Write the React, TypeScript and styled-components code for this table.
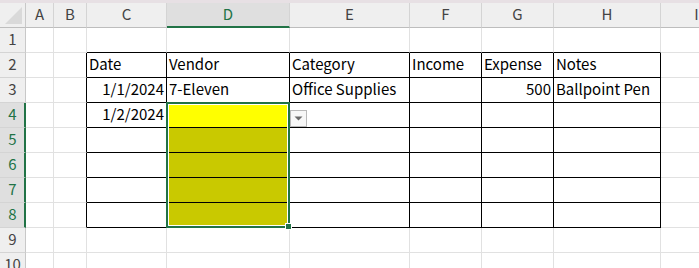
import React from 'react';
import styled, { createGlobalStyle } from 'styled-components';

const GlobalStyle = createGlobalStyle`
  html, body { margin: 0; padding: 0; background: #ffffff; overflow: hidden; }
  body { font-family: "Noto Sans CJK JP", "Noto Sans", sans-serif; }
`;

const GREEN = '#217346';
const GRID = '#e1e1e1';
const HEADER_BG = '#efefef';
const HEADER_SEL_BG = '#dfdfdf';
const HEADER_LINE = '#d4d4d4';
const ROW_H = 25;

type Col = { key: string; width: number };
const COLS: Col[] = [
  { key: 'A', width: 28 },
  { key: 'B', width: 33 },
  { key: 'C', width: 80 },
  { key: 'D', width: 123 },
  { key: 'E', width: 120 },
  { key: 'F', width: 72 },
  { key: 'G', width: 72 },
  { key: 'H', width: 107 },
  { key: 'I', width: 72 },
];
const ROW_HEADER_W = 26;
const ROW_COUNT = 10;

// table block C2:H8 carries thin black borders
const inTable = (r: number, c: number) => r >= 2 && r <= 8 && c >= 2 && c <= 7;
// D4:D8 is the current selection
const SEL_COL = 3;
const isSelRow = (r: number) => r >= 4 && r <= 8;

type CellData = { text: string; align?: 'left' | 'right' };
const DATA: Record<string, CellData> = {
  'C2': { text: 'Date' },
  'D2': { text: 'Vendor' },
  'E2': { text: 'Category' },
  'F2': { text: 'Income' },
  'G2': { text: 'Expense' },
  'H2': { text: 'Notes' },
  'C3': { text: '1/1/2024', align: 'right' },
  'D3': { text: '7-Eleven' },
  'E3': { text: 'Office Supplies' },
  'G3': { text: '500', align: 'right' },
  'H3': { text: 'Ballpoint Pen' },
  'C4': { text: '1/2/2024', align: 'right' },
};

const fillFor = (r: number, c: number): string | undefined => {
  if (c !== SEL_COL) return undefined;
  if (r === 4) return '#ffff00';
  if (r >= 5 && r <= 8) return '#c9c900';
  return undefined;
};

const Window = styled.div`
  width: 699px;
  height: 268px;
  overflow: hidden;
  display: flex;
  flex-direction: column;
  background: #ffffff;
`;

const TitleStrip = styled.div`
  height: 3px;
  flex: none;
  background: #e7e0e4;
`;

const Sheet = styled.div<{ $template: string }>`
  position: relative;
  display: grid;
  grid-template-columns: ${(p) => p.$template};
  grid-auto-rows: ${ROW_H}px;
  width: max-content;
`;

const Corner = styled.div`
  position: relative;
  box-sizing: border-box;
  background: ${HEADER_BG};
  border-right: 1px solid #c8c8c8;
  border-bottom: 1px solid #bdbdbd;
  overflow: hidden;
`;

const CornerTriangle = styled.svg`
  position: absolute;
  right: 3px;
  bottom: 3px;
`;

const ColHeader = styled.div<{ $selected: boolean }>`
  box-sizing: border-box;
  display: flex;
  align-items: center;
  justify-content: center;
  background: ${(p) => (p.$selected ? HEADER_SEL_BG : HEADER_BG)};
  border-right: 1px solid ${HEADER_LINE};
  border-bottom: ${(p) => (p.$selected ? `2px solid ${GREEN}` : '1px solid #bdbdbd')};
  color: ${(p) => (p.$selected ? GREEN : '#444444')};
  font-size: 15px;
  line-height: 1;
  padding-bottom: ${(p) => (p.$selected ? 2 : 3)}px;
`;

const RowHeader = styled.div<{ $selected: boolean }>`
  box-sizing: border-box;
  display: flex;
  align-items: center;
  justify-content: center;
  background: ${(p) => (p.$selected ? HEADER_SEL_BG : HEADER_BG)};
  border-right: ${(p) => (p.$selected ? `2px solid ${GREEN}` : '1px solid #c8c8c8')};
  border-bottom: 1px solid ${HEADER_LINE};
  color: ${(p) => (p.$selected ? GREEN : '#444444')};
  font-size: 15px;
  line-height: 1;
  padding-bottom: 3px;
  padding-left: ${(p) => (p.$selected ? 1 : 0)}px;
`;

const Cell = styled.div<{ $right: string; $bottom: string; $fill?: string; $align: 'left' | 'right' }>`
  box-sizing: border-box;
  display: flex;
  align-items: center;
  justify-content: ${(p) => (p.$align === 'right' ? 'flex-end' : 'flex-start')};
  padding: 0 2px 3px 2px;
  background: ${(p) => p.$fill ?? '#ffffff'};
  border-right: 1px solid ${(p) => p.$right};
  border-bottom: 1px solid ${(p) => p.$bottom};
  color: #000000;
  font-size: 15px;
  line-height: 1;
  white-space: nowrap;
  overflow: visible;
  min-width: 0;
`;

const DropButton = styled.div`
  align-self: flex-end;
  margin-left: -2px;
  margin-bottom: -3px;
  width: 17px;
  height: 17px;
  box-sizing: border-box;
  border: 1px solid #b9b9b9;
  background: #f7f7f7;
  display: flex;
  align-items: center;
  justify-content: center;
`;

const Selection = styled.div`
  position: absolute;
  box-sizing: border-box;
  border: 2px solid ${GREEN};
  box-shadow: inset 0 0 0 1px #ffffff;
  pointer-events: none;
`;

const FillHandle = styled.div`
  position: absolute;
  width: 7px;
  height: 7px;
  box-sizing: border-box;
  background: ${GREEN};
  border: 1px solid #ffffff;
`;

const colName = (c: number) => COLS[c].key;

export default function App() {
  const template = [ROW_HEADER_W, ...COLS.map((c) => c.width)].map((w) => `${w}px`).join(' ');

  const offsetX = (c: number) => ROW_HEADER_W + COLS.slice(0, c).reduce((s, col) => s + col.width, 0);
  const rowTop = (r: number) => ROW_H * r; // header is row 0

  const selLeft = offsetX(SEL_COL) - 1;
  const selTop = rowTop(4) - 1;
  const selWidth = COLS[SEL_COL].width + 1;
  const selHeight = ROW_H * 5 + 1;

  const cells: React.ReactNode[] = [];
  for (let r = 1; r <= ROW_COUNT; r++) {
    cells.push(
      <RowHeader key={`rh${r}`} $selected={isSelRow(r)}>
        {r}
      </RowHeader>
    );
    COLS.forEach((col, c) => {
      const ref = `${col.key}${r}`;
      const data = DATA[ref];
      const right = inTable(r, c) || inTable(r, c + 1) ? '#000000' : GRID;
      const bottom = inTable(r, c) || inTable(r + 1, c) ? '#000000' : GRID;
      cells.push(
        <Cell
          key={ref}
          $right={right}
          $bottom={bottom}
          $fill={fillFor(r, c)}
          $align={data?.align ?? 'left'}
        >
          {data?.text}
          {ref === 'E4' && (
            <DropButton>
              <svg width="9" height="5" viewBox="0 0 9 5">
                <path d="M0.5 0.5 L8.5 0.5 L4.5 4.5 Z" fill="#6a6a6a" />
              </svg>
            </DropButton>
          )}
        </Cell>
      );
    });
  }

  return (
    <>
      <GlobalStyle />
      <Window>
        <TitleStrip />
        <Sheet $template={template}>
          <Corner>
            <CornerTriangle width="17" height="17" viewBox="0 0 17 17">
              <path d="M17 0 L17 17 L0 17 Z" fill="#d9d9d9" />
            </CornerTriangle>
          </Corner>
          {COLS.map((col, c) => (
            <ColHeader key={col.key} $selected={c === SEL_COL}>
              {colName(c)}
            </ColHeader>
          ))}
          {cells}
          <Selection style={{ left: selLeft, top: selTop, width: selWidth, height: selHeight }} />
          <FillHandle style={{ left: selLeft + selWidth - 5, top: selTop + selHeight - 5 }} />
        </Sheet>
      </Window>
    </>
  );
}
